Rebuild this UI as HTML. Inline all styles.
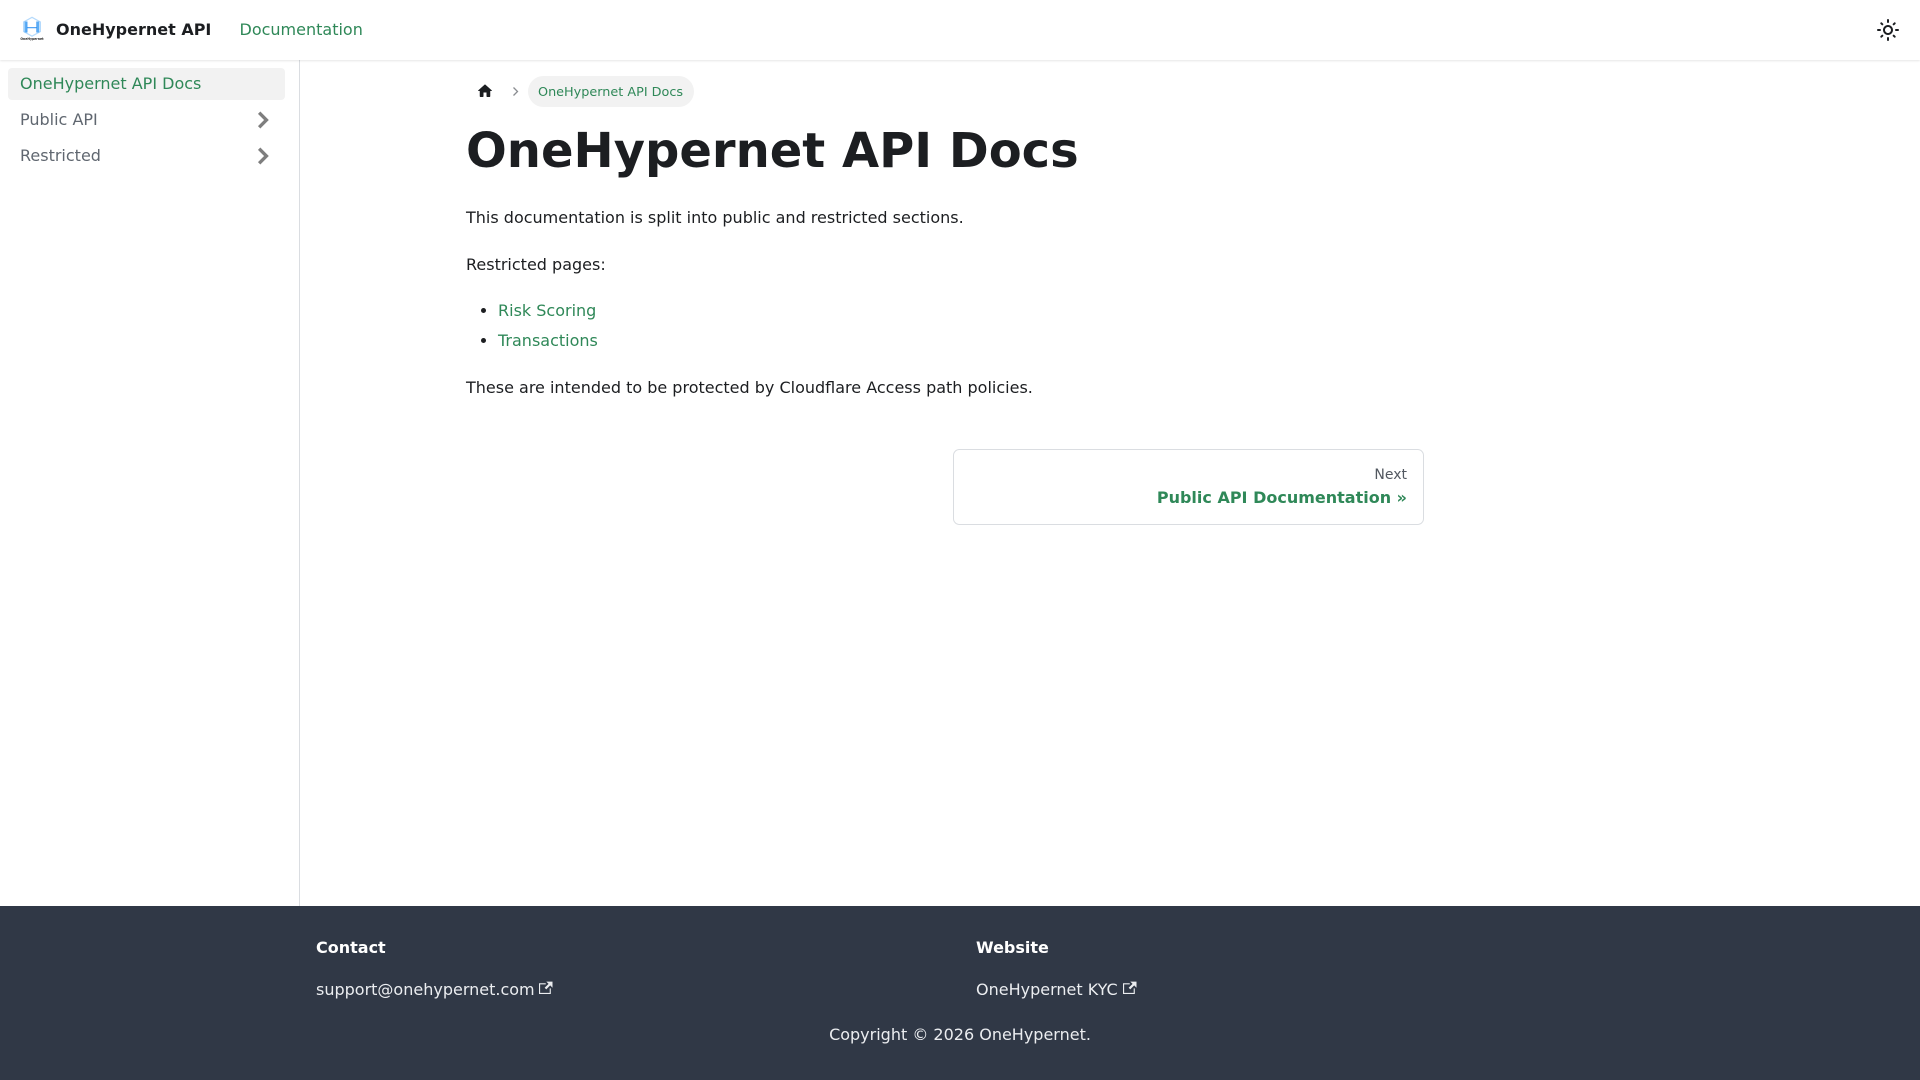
<!DOCTYPE html>
<html lang="en"><head><meta charset="utf-8"><title>OneHypernet API Docs</title>
<style>
*{box-sizing:border-box}
html,body{margin:0;padding:0;width:1920px;height:1080px;overflow:hidden;background:#fff;color:#1c1e21;font:16px/26.4px "DejaVu Sans",sans-serif;-webkit-font-smoothing:antialiased;text-rendering:optimizeLegibility}
a{text-decoration:none;color:#2f8858}
.a{position:absolute;white-space:nowrap}
#nav{position:absolute;left:0;top:0;width:1920px;height:60px;background:#fff;box-shadow:0 1px 2px 0 rgba(0,0,0,.1);z-index:2}
#side{position:absolute;left:0;top:60px;width:300px;height:846px;border-right:1px solid #dadde1}
#foot{position:absolute;left:0;top:906px;width:1920px;height:174px;background:#303846;color:#ebedf0}
#foot a{color:#ebedf0}
.item{position:absolute;left:8px;width:277px;height:32px;border-radius:4px;padding:0 12px;line-height:32px;color:#606770}
ul{margin:0;padding:0 0 0 32px}
li{height:30px;line-height:26.4px}
</style></head><body>
<div id="nav">
<svg class="a" style="left:20px;top:15px" width="24" height="28" viewBox="20 15 24 28">
<path d="M32 17.3L40.4 22V31.5L32 36.2L23.6 31.5V22Z" fill="#fff" stroke="#b5dafc" stroke-width="1.2"/>
<path d="M25.6 21.5V32.5M38.2 21.5V32.5" stroke="#5cadf5" stroke-width="2.2" fill="none"/>
<path d="M27 27.7H37" stroke="#2b8ef0" stroke-width="1" fill="none"/>
<path d="M27 21.5V32.5M36.8 21.5V32.5" stroke="#2b8ef0" stroke-width=".8" fill="none"/>
<text x="32" y="40.2" text-anchor="middle" font-family="DejaVu Sans" font-size="3.1" font-weight="700" fill="#222">OneHypernet</text>
</svg>
<b class="a" style="left:56px;top:17px;color:#1c1e21">OneHypernet API</b>
<a class="a" style="left:239.5px;top:17px" href="#">Documentation</a>
<svg class="a" style="left:1876px;top:18px" width="24" height="24" viewBox="0 0 24 24"><path fill="#1c1e21" d="M12 9c1.65 0 3 1.35 3 3s-1.35 3-3 3-3-1.35-3-3 1.35-3 3-3m0-2c-2.76 0-5 2.24-5 5s2.24 5 5 5 5-2.24 5-5-2.24-5-5-5zM2 13h2c.55 0 1-.45 1-1s-.45-1-1-1H2c-.55 0-1 .45-1 1s.45 1 1 1zm18 0h2c.55 0 1-.45 1-1s-.45-1-1-1h-2c-.55 0-1 .45-1 1s.45 1 1 1zM11 2v2c0 .55.45 1 1 1s1-.45 1-1V2c0-.55-.45-1-1-1s-1 .45-1 1zm0 18v2c0 .55.45 1 1 1s1-.45 1-1v-2c0-.55-.45-1-1-1s-1 .45-1 1zM5.99 4.58c-.39-.39-1.03-.39-1.41 0-.39.39-.39 1.03 0 1.41l1.06 1.06c.39.39 1.03.39 1.41 0s.39-1.03 0-1.41L5.99 4.58zm12.37 12.37c-.39-.39-1.03-.39-1.41 0-.39.39-.39 1.03 0 1.41l1.06 1.06c.39.39 1.03.39 1.41 0 .39-.39.39-1.03 0-1.41l-1.06-1.06zm1.06-10.96c.39-.39.39-1.03 0-1.41-.39-.39-1.03-.39-1.41 0l-1.06 1.06c-.39.39-.39 1.03 0 1.41s1.03.39 1.41 0l1.06-1.06zM7.05 18.36c.39-.39.39-1.03 0-1.41-.39-.39-1.03-.39-1.41 0l-1.06 1.06c-.39.39-.39 1.03 0 1.41s1.03.39 1.41 0l1.06-1.06z"/></svg>
</div>
<div id="side">
<div class="item" style="top:8px;background:#f2f2f2;color:#2f8858">OneHypernet API Docs</div>
<div class="item" style="top:44px">Public API</div>
<div class="item" style="top:80px">Restricted</div>
<svg class="a" style="left:247px;top:44px" width="32" height="32" viewBox="0 0 24 24" opacity=".5"><path fill="#000" stroke="#000" stroke-width=".5" d="M7.41 15.41L12 10.83l4.59 4.58L18 14l-6-6-6 6z" transform="rotate(90 12 12)"/></svg>
<svg class="a" style="left:247px;top:80px" width="32" height="32" viewBox="0 0 24 24" opacity=".5"><path fill="#000" stroke="#000" stroke-width=".5" d="M7.41 15.41L12 10.83l4.59 4.58L18 14l-6-6-6 6z" transform="rotate(90 12 12)"/></svg>
</div>
<svg class="a" style="left:476px;top:82px" width="18" height="18" viewBox="0 0 24 24"><path fill="#1c1e21" d="M10 19v-5h4v5c0 .55.45 1 1 1h3c.55 0 1-.45 1-1v-7h1.7c.46 0 .68-.57.33-.87L12.67 3.6c-.38-.34-.96-.34-1.34 0l-8.36 7.53c-.34.3-.13.87.33.87H5v7c0 .55.45 1 1 1h3c.55 0 1-.45 1-1z"/></svg>
<svg class="a" style="left:511px;top:86px" width="9" height="11" viewBox="0 0 9 11"><path d="M2.5 1.5L6.5 5.5L2.5 9.5" fill="none" stroke="#8a8d91" stroke-width="1.3"/></svg>
<div class="a" style="left:528px;top:76px;width:166px;height:31px;border-radius:16px;background:#f2f2f2;color:#2f8858;font-size:12.8px;line-height:33px;padding-left:10px">OneHypernet API Docs</div>
<h1 class="a" style="left:466px;top:121px;margin:0;font-size:48px;line-height:60px;font-weight:700">OneHypernet API Docs</h1>
<div class="a" style="left:466px;top:205px">This documentation is split into public and restricted sections.</div>
<div class="a" style="left:466px;top:252px">Restricted pages:</div>
<ul class="a" style="left:466px;top:298px;width:700px"><li><a href="#">Risk Scoring</a></li><li><a href="#">Transactions</a></li></ul>
<div class="a" style="left:466px;top:375px">These are intended to be protected by Cloudflare Access path policies.</div>
<div class="a" style="left:953px;top:449px;width:471px;height:76px;border:1px solid #dadde1;border-radius:6.4px"></div>
<div class="a" style="right:513px;top:462.5px;font-size:14px;line-height:25px;color:#525860">Next</div>
<b class="a" style="right:513px;top:485px;color:#2f8858;line-height:26px">Public API Documentation »</b>
<div id="foot">
<b class="a" style="left:316px;top:29px;color:#fff">Contact</b>
<a class="a" style="left:316px;top:71px" href="#">support@onehypernet.com</a>
<svg class="a" style="left:539px;top:75px" width="13.5" height="13.5" viewBox="0 0 24 24"><path fill="#ebedf0" d="M21 13v10h-21v-19h12v2h-10v15h17v-8h2zm3-12h-10.988l4.035 4-6.977 7.07 2.828 2.828 6.977-7.07 4.125 4.172v-11z"/></svg>
<b class="a" style="left:976px;top:29px;color:#fff">Website</b>
<a class="a" style="left:976px;top:71px" href="#">OneHypernet KYC</a>
<svg class="a" style="left:1123px;top:75px" width="13.5" height="13.5" viewBox="0 0 24 24"><path fill="#ebedf0" d="M21 13v10h-21v-19h12v2h-10v15h17v-8h2zm3-12h-10.988l4.035 4-6.977 7.07 2.828 2.828 6.977-7.07 4.125 4.172v-11z"/></svg>
<div class="a" style="left:0;width:1920px;text-align:center;top:116px">Copyright © 2026 OneHypernet.</div>
</div>
</body></html>
